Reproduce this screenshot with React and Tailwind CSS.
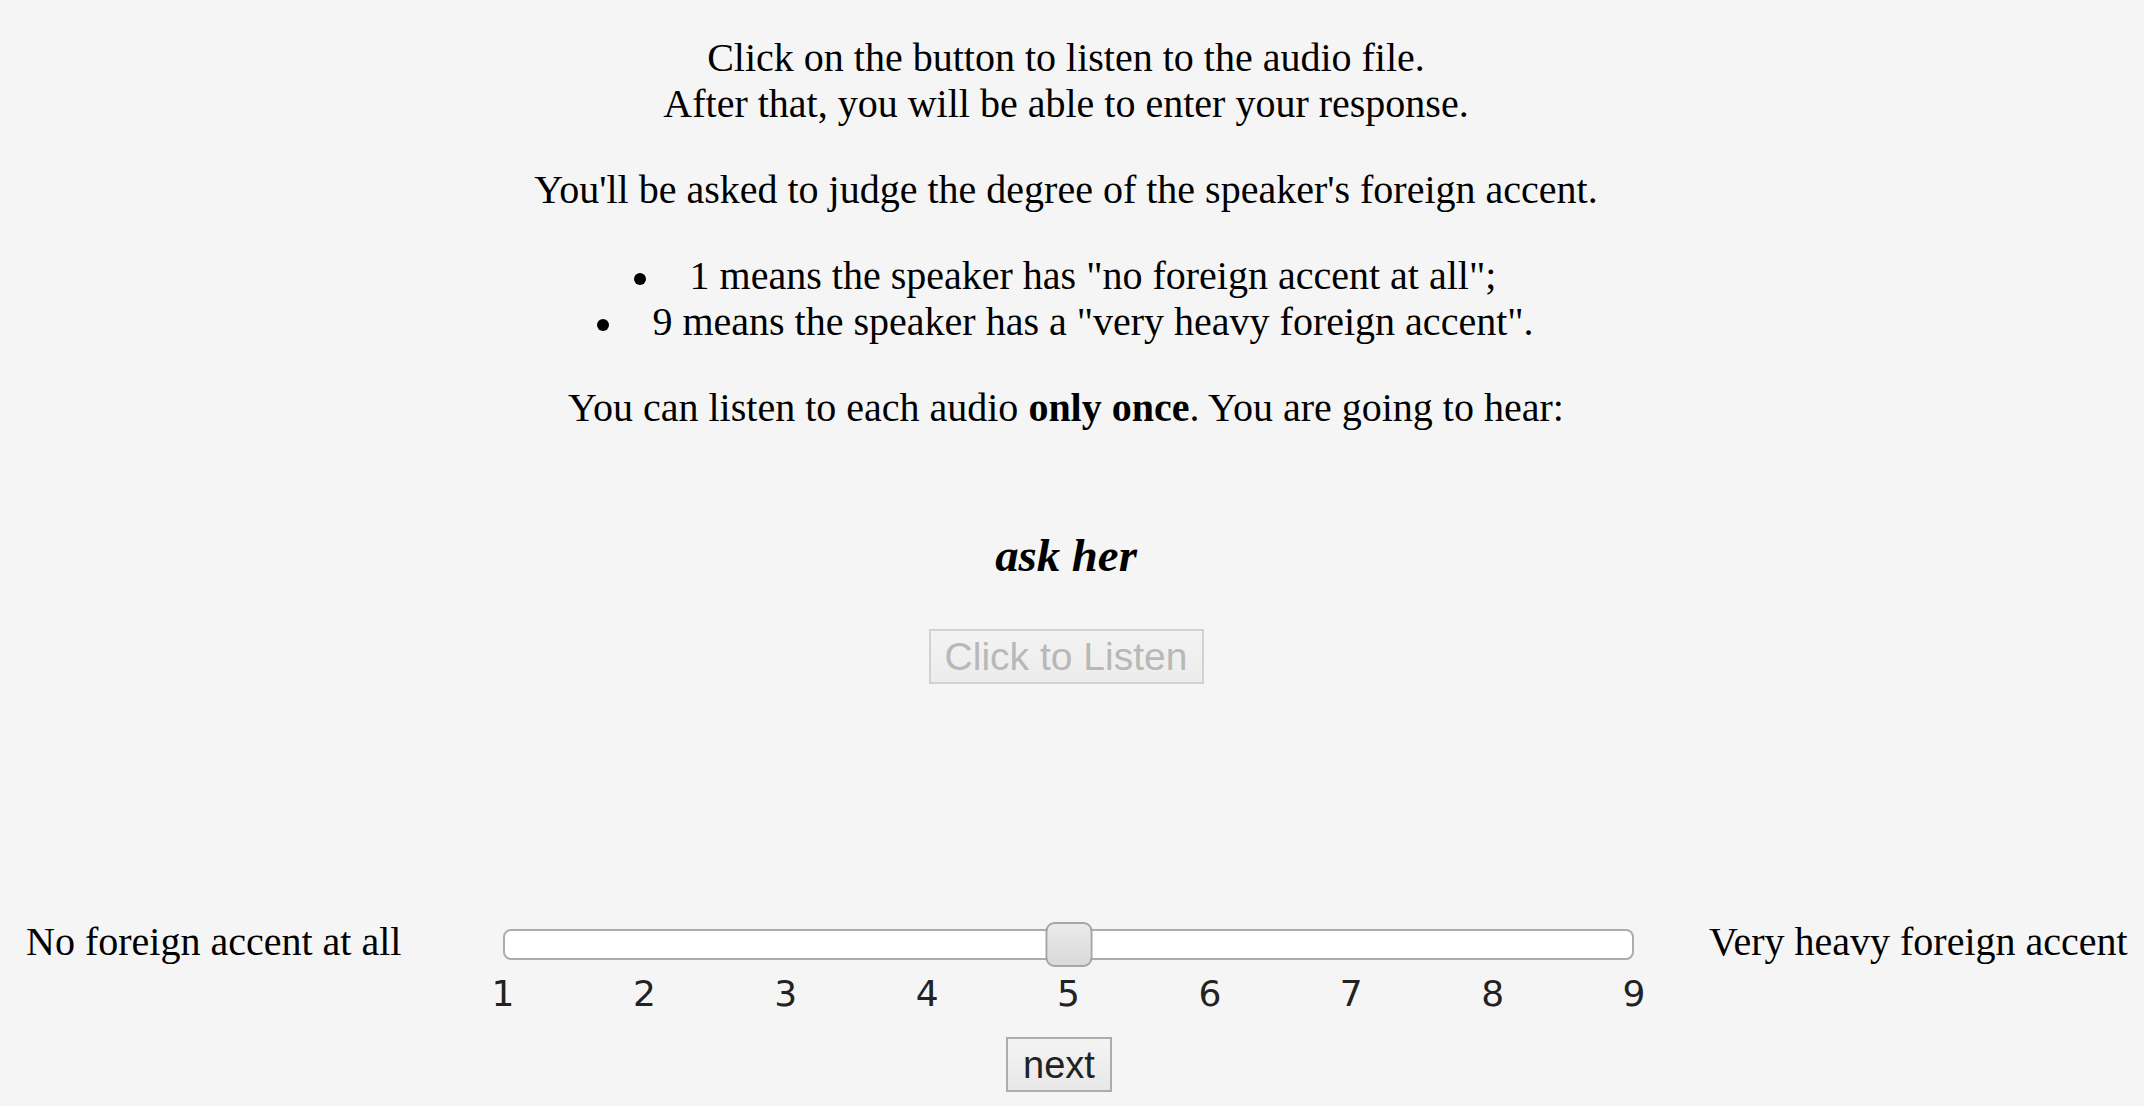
export default function App() {
  const ticks = [1, 2, 3, 4, 5, 6, 7, 8, 9];
  const value = 5;

  return (
    <div className="min-h-screen w-full bg-[#f5f5f5] text-black font-['Liberation_Serif','Times_New_Roman',serif] overflow-hidden">
      <div className="w-[2132px] pt-[35px] text-center text-[40px] leading-[46px]">
        <p>
          Click on the button to listen to the audio file.
          <br />
          After that, you will be able to enter your response.
        </p>

        <p className="mt-[40px]">
          You'll be asked to judge the degree of the speaker's foreign accent.
        </p>

        <ul className="mt-[40px] pl-[54px]">
          <li>
            <span className="relative inline-block">
              <span className="absolute right-full top-[20px] mr-[44px] h-[12px] w-[12px] rounded-full bg-black" />
              1 means the speaker has "no foreign accent at all";
            </span>
          </li>
          <li>
            <span className="relative inline-block">
              <span className="absolute right-full top-[20px] mr-[43px] h-[12px] w-[12px] rounded-full bg-black" />
              9 means the speaker has a "very heavy foreign accent".
            </span>
          </li>
        </ul>

        <p className="mt-[40px]">
          You can listen to each audio <b>only once</b>. You are going to hear:
        </p>

        <h3 className="mt-[97px] text-[46.8px] leading-[54px] font-bold italic">
          ask her
        </h3>

        <div className="mt-[47px] flex justify-center">
          <button
            disabled
            className="h-[55px] w-[275px] border-2 border-[#d2d2d2] bg-gradient-to-b from-[#f3f3f3] to-[#ececec] font-['Liberation_Sans',Arial,sans-serif] text-[39px] leading-[46px] text-[#b8b8b8]"
          >
            Click to Listen
          </button>
        </div>
      </div>

      <div className="mt-[235px] flex items-start pl-[26px]">
        <div className="w-[477px] whitespace-nowrap text-[40px] leading-[46px]">
          No foreign accent at all
        </div>

        <div className="w-[1131px]">
          <div className="relative mt-[10px] h-[31px] rounded-[8px] border-2 border-[#acacac] bg-white">
            <div
              className="absolute top-[-9px] h-[45px] w-[47px] -translate-x-1/2 rounded-[9px] border-2 border-[#a6a6a6] bg-gradient-to-b from-[#ebebeb] via-[#e2e2e2] to-[#d9d9d9]"
              style={{ left: `${((value - 1) / 8) * 100}%` }}
            />
          </div>
          <div className="mt-[13px] flex justify-between font-['DejaVu_Sans',Verdana,sans-serif] text-[36px] leading-[42px] text-[#222]">
            {ticks.map((t) => (
              <span key={t} className="flex w-0 justify-center">
                {t}
              </span>
            ))}
          </div>
        </div>

        <div className="ml-[75px] whitespace-nowrap text-[40px] leading-[46px]">
          Very heavy foreign accent
        </div>
      </div>

      <div className="mt-[22px] pl-[1006px]">
        <button className="h-[55px] w-[106px] border-2 border-[#acacac] bg-gradient-to-b from-[#f4f4f4] to-[#e8e8e8] font-['Liberation_Sans',Arial,sans-serif] text-[38px] leading-[46px] text-[#222]">
          next
        </button>
      </div>
    </div>
  );
}
